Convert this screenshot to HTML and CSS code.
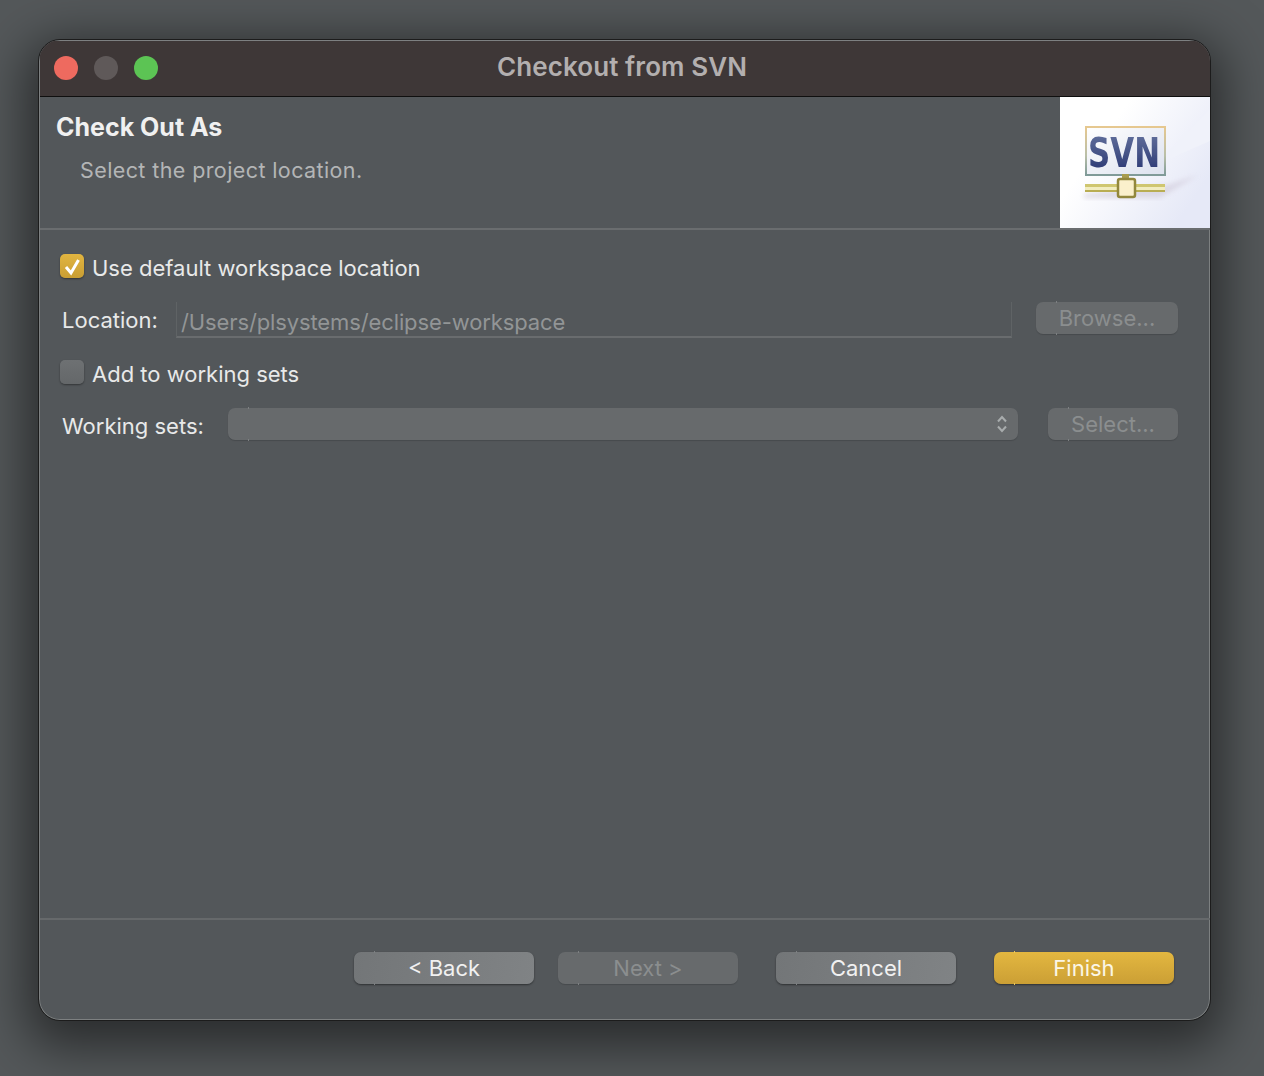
FILE: index.html
```html
<!DOCTYPE html>
<html lang="en">
<head>
    <meta charset="UTF-8">
    <title>Checkout from SVN</title>
    <link rel="stylesheet" href="styles.css">
</head>
<body>
    <div class="window">
        <div class="titlebar">
            <div class="lights">
                <span class="light light-close"></span>
                <span class="light light-min"></span>
                <span class="light light-max"></span>
            </div>
            <div class="title">Checkout from SVN</div>
        </div>
        <div class="banner">
            <div class="banner-text">
                <h1>Check Out As</h1>
                <p>Select the project location.</p>
            </div>
            <div class="banner-logo">
                <svg width="150" height="131" viewBox="0 0 150 131">
                    <defs>
                        <linearGradient id="bg" x1="0" y1="0" x2="1" y2="0.6">
                            <stop offset="0.35" stop-color="#ffffff"/>
                            <stop offset="1" stop-color="#e6e9f7"/>
                        </linearGradient>
                        <linearGradient id="screen" x1="0" y1="0" x2="1" y2="1">
                            <stop offset="0" stop-color="#ffffff"/>
                            <stop offset="1" stop-color="#dce1ee"/>
                        </linearGradient>
                        <linearGradient id="frame" x1="0" y1="0" x2="0" y2="1">
                            <stop offset="0" stop-color="#e6c890"/>
                            <stop offset="0.6" stop-color="#b9bfa8"/>
                            <stop offset="1" stop-color="#7f9a98"/>
                        </linearGradient>
                        <linearGradient id="letters" x1="0" y1="0" x2="0" y2="1">
                            <stop offset="0" stop-color="#66749f"/>
                            <stop offset="1" stop-color="#26336f"/>
                        </linearGradient>
                        <filter id="soft"><feGaussianBlur stdDeviation="0.6"/></filter>
                        <filter id="softer"><feGaussianBlur stdDeviation="2.500"/></filter>
                    </defs>
                    <rect width="150" height="131" fill="url(#bg)"/>
                    <path d="M150 12 L95 68 L150 44 Z" fill="#f0f2fa"/>
                    <path d="M24 101 L100 101 L138 78 L108 88 L24 97 Z" fill="#d3cedd" opacity="0.7" filter="url(#softer)"/>
                    <g filter="url(#soft)">
                        <rect x="26" y="30" width="79" height="48" fill="url(#screen)" stroke="url(#frame)" stroke-width="2"/>
                        <text class="svn-text" x="28" y="70" textLength="72" lengthAdjust="spacingAndGlyphs" fill="url(#letters)">SVN</text>
                        <rect x="25" y="87" width="80" height="3" fill="#cfc670"/>
                        <rect x="25" y="90" width="80" height="3" fill="#f2edc0"/>
                        <rect x="25" y="93" width="80" height="2" fill="#b9ad52"/>
                        <rect x="62" y="77" width="7" height="5" fill="#a89c50"/>
                        <rect x="58" y="82" width="17" height="18" rx="2" fill="#fbf0cc" stroke="#92873c" stroke-width="2.500"/>
                    </g>
                </svg>
            </div>
        </div>
        <div class="form">
            <label class="check-row check-row-first">
                <span class="checkbox checkbox-on">
                    <svg width="24" height="24" viewBox="0 0 24 24"><path d="M6 13 L11 19 L18.500 6" fill="none" stroke="#fff" stroke-width="3"/></svg>
                </span>
                <span class="check-label">Use default workspace location</span>
            </label>
            <div class="field-row field-row-location">
                <span class="field-label">Location:</span>
                <div class="text-field">/Users/plsystems/eclipse-workspace</div>
                <button class="btn btn-disabled btn-browse">Browse...</button>
            </div>
            <label class="check-row check-row-second">
                <span class="checkbox"></span>
                <span class="check-label">Add to working sets</span>
            </label>
            <div class="field-row field-row-sets">
                <span class="field-label">Working sets:</span>
                <div class="btn btn-disabled select-box">
                    <svg width="12" height="20" viewBox="0 0 12 20"><path d="M2 7.500 L6 3 L10 7.500 M2 12.500 L6 17 L10 12.500" fill="none" stroke="#a8acad" stroke-width="2"/></svg>
                </div>
                <button class="btn btn-disabled btn-select">Select...</button>
            </div>
        </div>
        <div class="footer">
            <button class="btn btn-normal">&lt; Back</button>
            <button class="btn btn-disabled btn-next">Next &gt;</button>
            <button class="btn btn-normal btn-cancel">Cancel</button>
            <button class="btn btn-primary">Finish</button>
        </div>
    </div>
</body>
</html>
```

FILE: styles.css
```css
* {
    box-sizing: border-box;
}
html, body {
    margin: 0;
    height: 100%;
}
body {
    padding: 39px 53px 55px 38px;
    overflow: hidden;
    background: #54585a;
    font-family: Inter, "Noto Sans", sans-serif;
    color: #e8e9e9;
}
.window {
    display: flex;
    flex-direction: column;
    width: 1173px;
    height: 982px;
    padding: 1px 0 1px 1px;
    background: #53575a;
    border: 1px solid #1c1c1c;
    border-radius: 22px;
    overflow: hidden;
    box-shadow: 0 0 0 1px #7d8081 inset, 0 14px 50px 12px rgba(0, 0, 0, 0.5);
}

/* title bar */
.titlebar {
    display: flex;
    align-items: center;
    flex: none;
    height: 56px;
    border-bottom: 1px solid #0f0f0f;
    background: #3e3737;
}
.lights {
    display: flex;
    gap: 16px;
    padding-left: 14px;
    padding-bottom: 2px;
}
.light {
    width: 24px;
    height: 24px;
    border-radius: 50%;
}
.light-close {
    background: #ee6a5f;
}
.light-min {
    background: #5f5959;
}
.light-max {
    background: #5cc454;
}
.title {
    width: 650px;
    margin-left: 139px;
    padding-bottom: 5px;
    text-align: center;
    font-size: 26px;
    letter-spacing: 0.1px;
    font-weight: 600;
    color: #b3afaf;
}

/* header */
.banner {
    display: flex;
    justify-content: space-between;
    flex: none;
    height: 133px;
    border-bottom: 2px solid #6a6d6f;
}
.banner-text {
    padding: 13px 0 0 16px;
}
.banner-text h1 {
    margin: 0;
    font-size: 25px;
    line-height: 34px;
    font-weight: 700;
    color: #f0f0f0;
}
.banner-text p {
    margin: 11px 0 0 24px;
    font-size: 21.500px;
    line-height: 30px;
    letter-spacing: 0.4px;
    color: #b3b5b6;
}
.banner-logo {
    width: 150px;
    height: 131px;
}
.banner-logo svg {
    display: block;
}
.svn-text {
    font-family: "DejaVu Sans", sans-serif;
    font-weight: 700;
    font-size: 40px;
}

/* form */
.form {
    flex: 1;
    padding-left: 20px;
    font-size: 22px;
}
.check-row {
    display: flex;
    align-items: flex-start;
    gap: 8px;
    height: 24px;
}
.check-label {
    line-height: 28px;
}
.check-row-first {
    margin-top: 24px;
}
.check-row-second {
    margin-top: 22px;
}
.checkbox {
    flex: none;
    width: 24px;
    height: 24px;
    border-radius: 5px;
    background: linear-gradient(#6e7173, #646769);
    box-shadow: 0 1px 2px rgba(0, 0, 0, 0.4);
}
.checkbox svg {
    display: block;
}
.checkbox-on {
    background: linear-gradient(#e2b540, #c99e33);
}
.field-row {
    display: flex;
    align-items: flex-start;
}
.field-row-location {
    margin-top: 24px;
}
.field-row-sets {
    margin-top: 24px;
}
.field-label {
    flex: none;
    margin-left: 2px;
}
.field-row-location .field-label {
    width: 114px;
    line-height: 36px;
}
.field-row-sets .field-label {
    width: 166px;
    line-height: 36px;
}
.text-field {
    width: 836px;
    height: 36px;
    padding: 2px 0 0 4px;
    line-height: 36px;
    letter-spacing: -0.12px;
    border-left: 1px solid #5f6365;
    border-right: 1px solid #5f6365;
    border-bottom: 2px solid #696c6e;
    color: #929596;
    white-space: nowrap;
}

/* buttons */
.btn {
    position: relative;
    flex: none;
    height: 32px;
    padding: 0;
    border: none;
    border-radius: 7px;
    font-family: inherit;
    font-size: 22px;
    line-height: 32px;
    text-align: center;
}
.btn::before,
.btn::after {
    content: "";
    position: absolute;
    left: 20px;
    width: 1px;
    height: 2px;
    background: #7d8082;
}
.btn::before {
    top: -1px;
}
.btn::after {
    bottom: -1px;
}
.btn-disabled {
    background: #676a6c;
    color: #8b8e8f;
    box-shadow: 0 1px 1px rgba(0, 0, 0, 0.15);
}
.btn-normal {
    background: linear-gradient(100deg, #737678, #808385);
    color: #f1f1f1;
    box-shadow: 0 1px 2px rgba(0, 0, 0, 0.45);
}
.btn-primary {
    background: linear-gradient(#e3b740, #cb9f35);
    color: #fbf6e6;
    box-shadow: 0 1px 2px rgba(0, 0, 0, 0.45);
}
.btn-primary::before,
.btn-primary::after {
    background: #eac65a;
}
.btn-browse {
    width: 142px;
    margin-left: 24px;
}
.select-box {
    display: flex;
    align-items: center;
    justify-content: flex-end;
    width: 790px;
    padding-right: 10px;
}
.btn-select {
    width: 130px;
    margin-left: 30px;
}

/* footer */
.footer {
    display: flex;
    flex: none;
    height: 101px;
    padding: 32px 0 0 314px;
    border-top: 2px solid #66696b;
}
.footer .btn {
    width: 180px;
}
.btn-next {
    margin-left: 24px;
}
.btn-cancel {
    margin-left: 38px;
}
.btn-primary {
    margin-left: 38px;
}
```
